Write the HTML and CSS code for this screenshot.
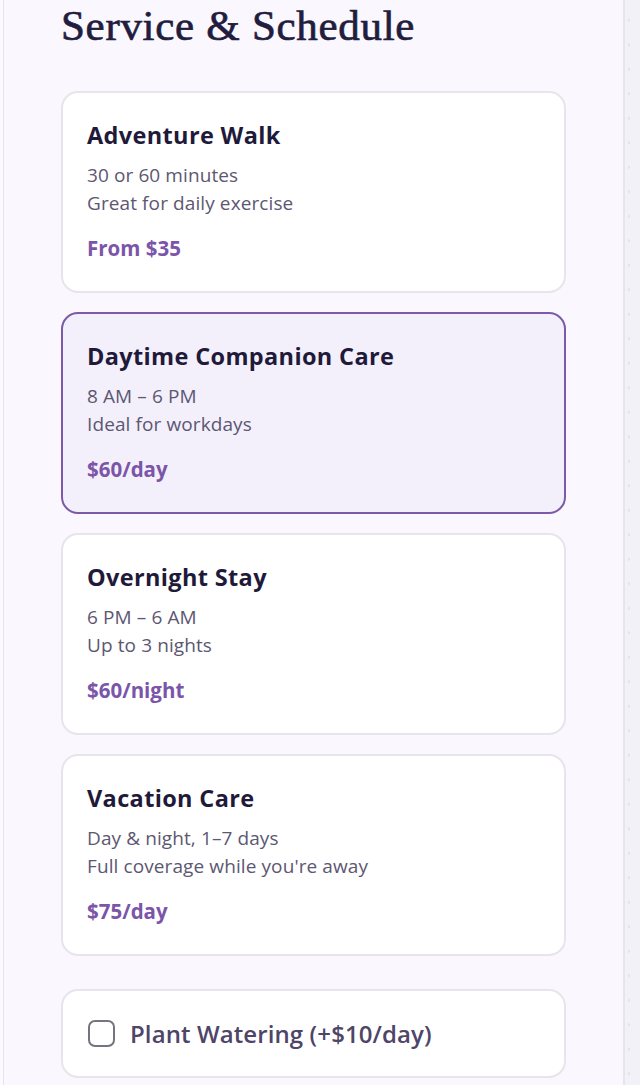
FILE: index.html
```html
<!DOCTYPE html>
<html lang="en">
<head>
<meta charset="utf-8">
<title>Service &amp; Schedule</title>
<link rel="stylesheet" href="styles.css">
</head>
<body>
<div class="page">
  <main class="panel">
    <h1 class="heading">Service &amp; Schedule</h1>
    <div class="options">
      <div class="card">
        <div class="card-title">Adventure Walk</div>
        <div class="card-desc">30 or 60 minutes<br>Great for daily exercise</div>
        <div class="card-price">From $35</div>
      </div>
      <div class="card selected">
        <div class="card-title">Daytime Companion Care</div>
        <div class="card-desc">8 AM – 6 PM<br>Ideal for workdays</div>
        <div class="card-price">$60/day</div>
      </div>
      <div class="card">
        <div class="card-title">Overnight Stay</div>
        <div class="card-desc">6 PM – 6 AM<br>Up to 3 nights</div>
        <div class="card-price">$60/night</div>
      </div>
      <div class="card">
        <div class="card-title">Vacation Care</div>
        <div class="card-desc">Day &amp; night, 1–7 days<br>Full coverage while you're away</div>
        <div class="card-price">$75/day</div>
      </div>
    </div>
    <label class="addon">
      <span class="checkbox"></span>
      <span class="addon-label">Plant Watering (+$10/day)</span>
    </label>
  </main>
</div>
</body>
</html>
```

FILE: styles.css
```css
html, body {
  margin: 0;
  padding: 0;
}
body {
  background-color: #f3f1f8;
  background-image: radial-gradient(circle, #e4e1ec 1px, transparent 1.6px);
  background-size: 24px 24.5px;
  background-position: 617px 8px;
  min-height: 1085px;
  overflow: hidden;
}
.page {
  display: flex;
}
.panel {
  margin-left: 3px;
  width: 622px;
  min-height: 1085px;
  box-sizing: border-box;
  background: #faf8fe;
  border-left: 1px solid #e7e4ef;
  border-right: 2px solid #e7e4ef;
  padding: 1px 0 0 57px;
  box-shadow: -3px 0 0 #fbfafd;
}
.heading {
  margin: 0;
  font-family: "Liberation Serif", "Times New Roman", serif;
  font-weight: 400;
  font-size: 43px;
  line-height: 50px;
  color: #221d3e;
  letter-spacing: 0.7px;
  -webkit-text-stroke: 0.7px #221d3e;
}
.options {
  margin-top: 40px;
  display: flex;
  flex-direction: column;
  gap: 19px;
  width: 505px;
}
.card {
  box-sizing: border-box;
  height: 202px;
  background: #ffffff;
  border: 2px solid #e7e4ec;
  border-radius: 17px;
  padding: 26px 24px 0 24px;
  font-family: "Open Sans", "Noto Sans", sans-serif;
}
.card.selected {
  background: #f3f0fb;
  border-color: #7c5aa8;
}
.card-title {
  font-size: 23.5px;
  line-height: 32px;
  font-weight: 700;
  color: #1f1a3a;
  letter-spacing: 0.35px;
}
.card-desc {
  margin-top: 10px;
  font-size: 19px;
  line-height: 28px;
  color: #5d5772;
  letter-spacing: 0.1px;
}
.card-price {
  margin-top: 17px;
  font-size: 20.5px;
  line-height: 28px;
  font-weight: 700;
  color: #7b55a9;
}
.addon {
  margin-top: 33px;
  width: 505px;
  height: 89px;
  box-sizing: border-box;
  display: flex;
  align-items: center;
  gap: 15px;
  padding: 0 25px;
  background: #ffffff;
  border: 2px solid #e7e4ec;
  border-radius: 17px;
  font-family: "Open Sans", "Noto Sans", sans-serif;
}
.checkbox {
  width: 27px;
  height: 27px;
  box-sizing: border-box;
  border: 2.5px solid #77737f;
  border-radius: 7px;
  background: #fff;
  flex: none;
}
.addon-label {
  font-size: 24px;
  font-weight: 600;
  color: #4e4568;
  letter-spacing: 0.1px;
}
```
